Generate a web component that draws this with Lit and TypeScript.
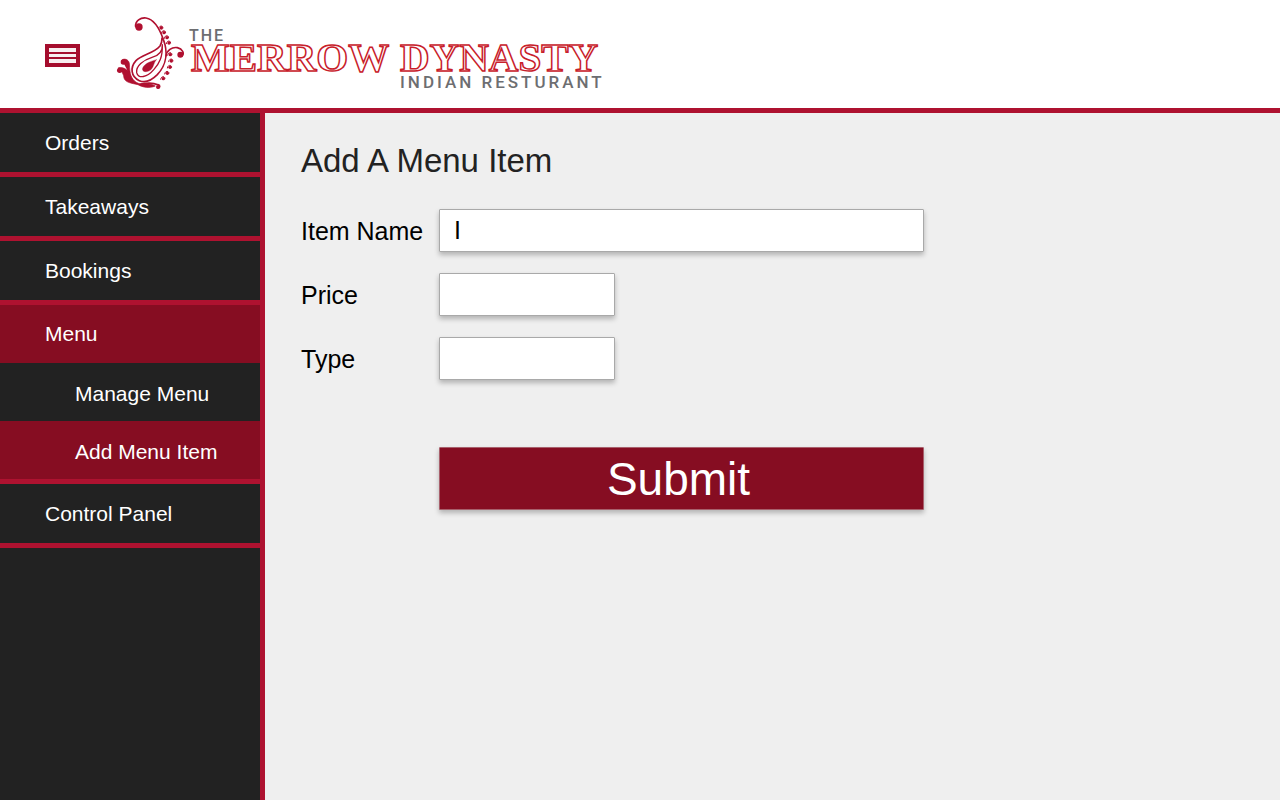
import { LitElement, html, css, svg } from "lit";
import { customElement, state } from "lit/decorators.js";

const CRIMSON = "#b01030";

@customElement("brand-logo")
class BrandLogo extends LitElement {
  static styles = css`
    :host { display: block; }
    svg { display: block; }
    .name {
      font: bold 41px "Liberation Serif", serif;
      font-kerning: none;
      fill: #fff;
      stroke: #c8202a;
      stroke-width: 1.5px;
    }
    .tag {
      font-family: Roboto, sans-serif;
      font-weight: 500;
      fill: #6d6e71;
    }
    .the { font-size: 16px; letter-spacing: 2px; }
    .kind { font-size: 17px; letter-spacing: 3px; }
  `;

  render() {
    const beads = [
      [154, 54], [162, 68], [171, 83], [177, 99], [181, 134],
      [184, 153], [180, 172], [172, 190], [160, 206],
    ];
    return html`
      <svg width="510" height="84" viewBox="0 0 510 84" role="img" aria-label="The Merrow Dynasty Indian Resturant">
        <g transform="scale(0.3333) translate(0 -9)" fill="none" stroke=${CRIMSON} stroke-width="5" stroke-linecap="round">
          <path d="M77 50C75 32 92 22 108 24C134 28 150 60 160 88C173 122 172 162 142 194C126 210 106 220 88 212C62 200 60 172 78 152C96 134 132 130 150 108C154 102 156 96 156 84" />
          <path d="M157 104C158 122 148 136 126 142C100 150 77 168 80 188C84 208 112 202 132 178C148 160 158 142 157 104" stroke-width="4" />
          <path d="M168 138C170 122 186 110 202 113C218 117 224 130 216 138" />
          <circle cx="87" cy="51" r="11" fill=${CRIMSON} stroke="none" />
          <circle cx="211" cy="134" r="9" fill=${CRIMSON} stroke="none" />
          <path d="M139 149C130 152 104 158 98 174C94 188 114 188 124 178C132 169 131 158 139 149Z" fill=${CRIMSON} stroke-width="1" />
          <path d="M36 150C42 144 56 148 58 160C59 168 58 176 60 184C62 202 72 218 92 222C110 222 124 220 136 228C118 236 98 232 84 224C66 220 46 218 42 204C42 194 34 180 24 174C44 168 58 184 62 200" fill=${CRIMSON} stroke-width="2" />
          <path d="M92 222C112 218 130 218 144 224C152 226 150 234 144 234" />
          <circle cx="40" cy="156" r="8" fill=${CRIMSON} stroke="none" />
          <circle cx="29" cy="181" r="8" fill=${CRIMSON} stroke="none" />
          <circle cx="144" cy="231" r="6" fill=${CRIMSON} stroke="none" />
          ${beads.map(
            ([x, y]) => svg`
              <circle cx=${x} cy=${y} r="5" fill=${CRIMSON} stroke="none" />
              <path d=${`M${x - 8} ${y + 2}C${x - 8} ${y - 8} ${x + 6} ${y - 9} ${x + 5} ${y}`} stroke-width="3" />`
          )}
        </g>
        <g class="tag">
          <text class="the" x="79" y="28">THE</text>
          <text class="kind" x="290" y="75">INDIAN RESTURANT</text>
        </g>
        <g class="name">
          <text x="81" y="58">MERROW</text>
          <text x="290" y="58">DYNASTY</text>
        </g>
      </svg>
    `;
  }
}

@customElement("app-root")
class AppRoot extends LitElement {
  static styles = css`
    * { box-sizing: border-box; }
    :host {
      display: flex;
      flex-direction: column;
      min-height: 100vh;
      font-family: "Liberation Sans", Arial, sans-serif;
      background: #efefef;
      color: #000;
    }
    header {
      display: flex;
      align-items: center;
      gap: 30px;
      height: 113px;
      padding: 2px 45px 0;
      background: #fff;
      border-bottom: 5px solid #ae1230;
    }
    .toggle {
      display: block;
      padding: 0;
      border: 0;
      background: none;
    }
    .toggle svg { display: block; }
    .body { display: flex; flex: 1; }
    nav {
      width: 265px;
      flex: none;
      background: #222;
      border-right: 5px solid #ae1230;
    }
    ul { list-style: none; margin: 0; padding: 0; }
    .item { border-bottom: 5px solid #ae1230; }
    a {
      display: block;
      padding: 18px 45px 17px;
      font-size: 21px;
      line-height: 24px;
      color: #fff;
      text-decoration: none;
    }
    .group a { padding-top: 17px; padding-bottom: 17px; }
    .group .sub { padding: 19px 0 15px 75px; }
    .group .active { background: #860d22; }
    main { flex: 1; padding: 28px 36px; }
    h1 {
      margin: 0 0 28px;
      font-size: 33px;
      line-height: 40px;
      font-weight: 400;
      color: #222;
    }
    form {
      display: grid;
      grid-template-columns: 138px minmax(0, 485px);
      row-gap: 21px;
      align-items: center;
    }
    label { font-size: 25px; line-height: 32px; white-space: nowrap; }
    input {
      width: 100%;
      height: 43px;
      padding: 0 14px;
      border: 1px solid #a9a9a9;
      border-radius: 1px;
      background: #fff;
      font: 25px "Liberation Sans", Arial, sans-serif;
      box-shadow: 0 3px 5px rgba(0, 0, 0, 0.25);
      outline: none;
    }
    .short { width: 176px; }
    .submit {
      grid-column: 2;
      height: 63px;
      margin-top: 46px;
      padding: 0 6px 0 0;
      border: 1px solid #a8606c;
      border-radius: 1px;
      background: #860d22;
      color: #fff;
      font: 46px "Liberation Sans", Arial, sans-serif;
      box-shadow: 0 3px 5px rgba(0, 0, 0, 0.25);
    }
  `;

  @state() private itemName = "I";

  render() {
    return html`
      <header>
        <button class="toggle" type="button" aria-label="Toggle menu">
          <svg width="35" height="23" viewBox="0 0 35 23">
            <rect width="35" height="23" fill="#a50d2d" />
            <path d="M4 4h27v4H4zM4 10h27v3H4zM4 15h27v4H4z" fill="#f8eef0" />
          </svg>
        </button>
        <brand-logo></brand-logo>
      </header>
      <div class="body">
        <nav>
          <ul>
            <li class="item"><a href="#orders">Orders</a></li>
            <li class="item"><a href="#takeaways">Takeaways</a></li>
            <li class="item"><a href="#bookings">Bookings</a></li>
            <li class="item group">
              <a class="active" href="#menu">Menu</a>
              <ul>
                <li><a class="sub" href="#manage">Manage Menu</a></li>
                <li><a class="sub active" href="#add">Add Menu Item</a></li>
              </ul>
            </li>
            <li class="item"><a href="#control">Control Panel</a></li>
          </ul>
        </nav>
        <main>
          <h1>Add A Menu Item</h1>
          <form @submit=${(e: Event) => e.preventDefault()}>
            <label for="name">Item Name</label>
            <input id="name" type="text" .value=${this.itemName}
              @input=${(e: InputEvent) => (this.itemName = (e.target as HTMLInputElement).value)} />
            <label for="price">Price</label>
            <input id="price" class="short" type="text" />
            <label for="type">Type</label>
            <input id="type" class="short" type="text" />
            <button class="submit" type="submit">Submit</button>
          </form>
        </main>
      </div>
    `;
  }
}
